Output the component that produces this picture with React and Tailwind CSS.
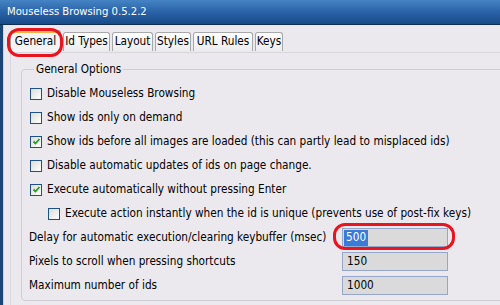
const FONT = { fontFamily: '"DejaVu Sans Condensed", "DejaVu Sans", sans-serif' }

function Check({ checked }) {
  return (
    <span className="w-[12px] h-[12px] shrink-0 border border-[#1c5180] bg-gradient-to-br from-[#dcdcd6] to-[#ffffff] flex items-center justify-center">
      {checked && (
        <svg width="9" height="9" viewBox="0 0 9 9">
          <path d="M1.5 4.5 L3.5 6.5 L7.5 2" fill="none" stroke="#21a121" strokeWidth="1.8" />
        </svg>
      )}
    </span>
  )
}

function Row({ checked, indent, children }) {
  return (
    <div className={`h-[24px] flex items-center gap-[5px] whitespace-nowrap ${indent ? 'pl-[18px]' : ''}`}>
      <Check checked={checked} />
      <span>{children}</span>
    </div>
  )
}

function Field({ label, value, selected }) {
  return (
    <div className="h-[24px] flex items-center">
      <span className="w-[299px] -ml-[1px] mr-[14px] whitespace-nowrap overflow-hidden">{label}</span>
      <div className="w-[106px] h-[19px] border border-[#94a6c9] bg-[#dadada] flex items-center pl-[1px]">
        {selected ? (
          <span className="bg-[#3a7ad8] text-white px-[2px] h-[16px] flex items-center">{value}</span>
        ) : (
          <span className="px-[3px]">{value}</span>
        )}
      </div>
    </div>
  )
}

const tabs = [
  ['Id Types', 'w-[47px]'],
  ['Layout', 'w-[41px]'],
  ['Styles', 'w-[36px]'],
  ['URL Rules', 'w-[60px]'],
  ['Keys', 'w-[28px]'],
]

export default function App() {
  return (
    <div className="w-[500px] h-[305px] overflow-hidden relative text-[11.7px] text-black" style={FONT}>
      <div className="h-[25px] bg-gradient-to-b from-[#4584c4] via-[#2a63a8] to-[#184a88] border-b border-[#0e2d57] text-white text-[11.2px] pl-[7px] flex items-center">
        Mouseless Browsing 0.5.2.2
      </div>

      <div className="flex h-[280px]">
        <div className="w-[3px] bg-[#1b4477]" />
        <div className="w-[1px] bg-[#c9d2e2]" />
        <div className="flex-1 bg-[#ece9ee] flex flex-col overflow-hidden">
          {/* tabs */}
          <div className="h-[27px] flex items-end pl-[6px] gap-[2px] whitespace-nowrap">
            <div className="w-[51px] h-[22px] flex items-center justify-center border border-b-0 border-[#a0a0a0] rounded-t-[3px] bg-[#f4f3f5] relative">
              <span className="absolute top-0 left-[2px] right-[2px] h-[2px] bg-[#f0b848]" />
              General
            </div>
            {tabs.map(([t, w]) => (
              <div key={t} className={`${w} h-[19px] mb-[1px] flex items-center justify-center border border-b-0 border-[#a8a8a8] rounded-t-[3px] bg-gradient-to-b from-[#ffffff] to-[#ecebee] overflow-hidden`}>
                {t}
              </div>
            ))}
          </div>

          {/* panel */}
          <div className="flex-1 ml-[6px] border-l border-t border-[#d8d6dc] pl-[10px] pt-[8px]">
            <fieldset className="w-[520px] h-[240px] border border-[#cfcdd3] rounded-[4px] pl-[8px]">
              <legend className="ml-[4px] px-[2px]">General Options</legend>
              <div className="pt-[3px]">
                <Row>Disable Mouseless Browsing</Row>
                <Row>Show ids only on demand</Row>
                <Row checked>Show ids before all images are loaded (this can partly lead to misplaced ids)</Row>
                <Row>Disable automatic updates of ids on page change.</Row>
                <Row checked>Execute automatically without pressing Enter</Row>
                <Row indent>Execute action instantly when the id is unique (prevents use of post-fix keys)</Row>
                <Field label="Delay for automatic execution/clearing keybuffer (msec)" value="500" selected />
                <Field label="Pixels to scroll when pressing shortcuts" value="150" />
                <Field label="Maximum number of ids" value="1000" />
              </div>
            </fieldset>
          </div>
        </div>
      </div>

      {/* red annotation rings */}
      <div className="absolute left-[7px] top-[28px] w-[56px] h-[29px] border-[3px] border-[#e8141e] rounded-[12px]" />
      <div className="absolute left-[333px] top-[223px] w-[122px] h-[27px] border-[3px] border-[#e8141e] rounded-[12px]" />
    </div>
  )
}
